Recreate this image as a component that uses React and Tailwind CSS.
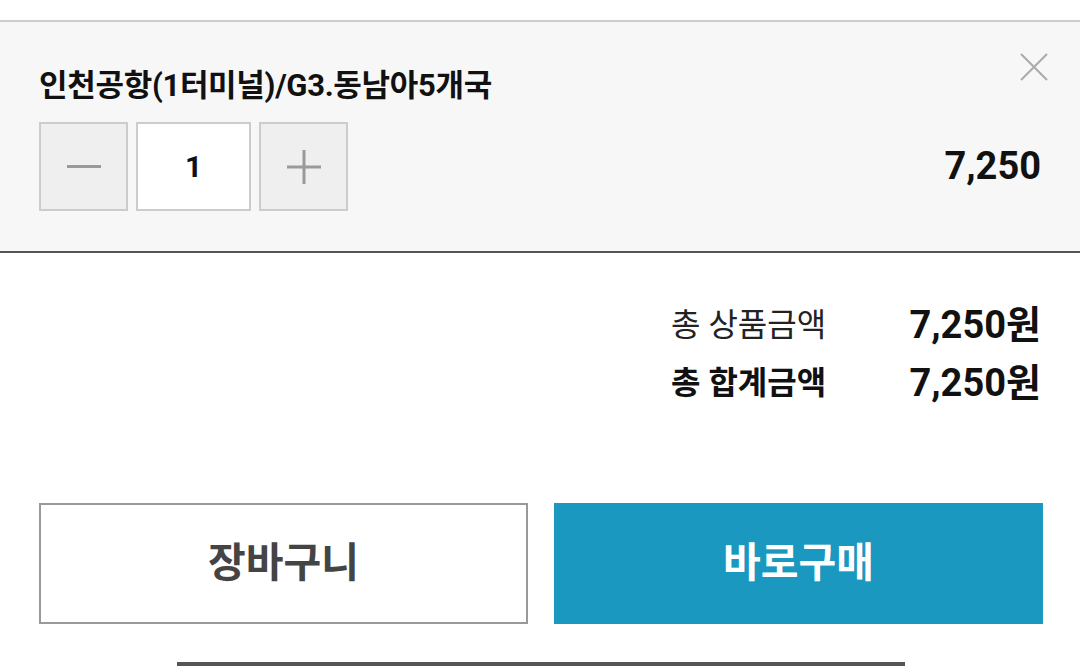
import { useState } from 'react';

const font = { fontFamily: "Roboto, 'Noto Sans CJK KR', sans-serif" };

const App = () => {
  const [qty, setQty] = useState(1);
  const price = 7250 * qty;
  const fmt = (n) => n.toLocaleString('en-US');

  return (
    <div className="w-[1080px] h-[666px] bg-white overflow-hidden flex flex-col" style={font}>
      {/* Selected option panel */}
      <div className="mt-[20px] h-[234px] bg-[#f7f7f7] border-t-2 border-b-2 border-t-[#cccccc] border-b-[#555555] pl-[39px] pr-[38px] relative">
        <button type="button" className="absolute right-[30px] top-[29px] w-[32px] h-[32px] flex items-center justify-center">
          <svg width="30" height="30" viewBox="0 0 30 30" fill="none" stroke="#aaaaaa" strokeWidth="2">
            <path d="M2 2 L28 28 M28 2 L2 28" />
          </svg>
        </button>
        <div className="pt-[44px] h-[100px] text-[31px] font-bold text-[#111] leading-[40px] tracking-[-0.3px]">
          인천공항(1터미널)/G3.동남아5개국
        </div>
        <div className="flex items-center justify-between">
          <div className="flex items-center gap-[8px]">
            <button
              type="button"
              onClick={() => setQty(Math.max(1, qty - 1))}
              className="w-[89px] h-[89px] bg-[#efefef] border-2 border-[#cccccc] flex items-center justify-center"
            >
              <span className="block w-[34px] h-[3px] bg-[#9a9a9a]" />
            </button>
            <div className="w-[115px] h-[89px] bg-white border-2 border-[#cccccc] flex items-center justify-center text-[30px] font-bold text-[#111]">
              {qty}
            </div>
            <button
              type="button"
              onClick={() => setQty(qty + 1)}
              className="w-[89px] h-[89px] bg-[#efefef] border-2 border-[#cccccc] flex items-center justify-center"
            >
              <svg width="36" height="36" viewBox="0 0 36 36" stroke="#9a9a9a" strokeWidth="3">
                <path d="M18 1 V35 M1 18 H35" />
              </svg>
            </button>
          </div>
          <div className="text-[38px] font-bold text-[#111] pr-[1px]">{fmt(price)}</div>
        </div>
      </div>

      {/* Totals */}
      <div className="pt-[50px] pr-[39px] flex flex-col items-end gap-[14px]">
        <div className="flex items-center h-[44px]">
          <span className="w-[236px] text-[32px] text-[#222]">총 상품금액</span>
          <span className="w-[134px] text-right text-[38px] font-bold text-[#111] whitespace-nowrap">{fmt(price)}원</span>
        </div>
        <div className="flex items-center h-[44px]">
          <span className="w-[236px] text-[32px] font-bold text-[#111]">총 합계금액</span>
          <span className="w-[134px] text-right text-[38px] font-bold text-[#111] whitespace-nowrap">{fmt(price)}원</span>
        </div>
      </div>

      {/* Actions */}
      <div className="mt-[98px] pl-[39px] pr-[37px] flex gap-[26px]">
        <button type="button" className="w-[489px] h-[121px] bg-white border-2 border-[#999999] text-[41px] font-bold text-[#444]">
          장바구니
        </button>
        <button type="button" className="flex-1 h-[121px] bg-[#1a98c0] text-[41px] font-bold text-white">
          바로구매
        </button>
      </div>

      <div className="mt-[38px] ml-[177px] w-[728px] h-[4px] bg-[#555555]" />
    </div>
  );
};

export default App;
